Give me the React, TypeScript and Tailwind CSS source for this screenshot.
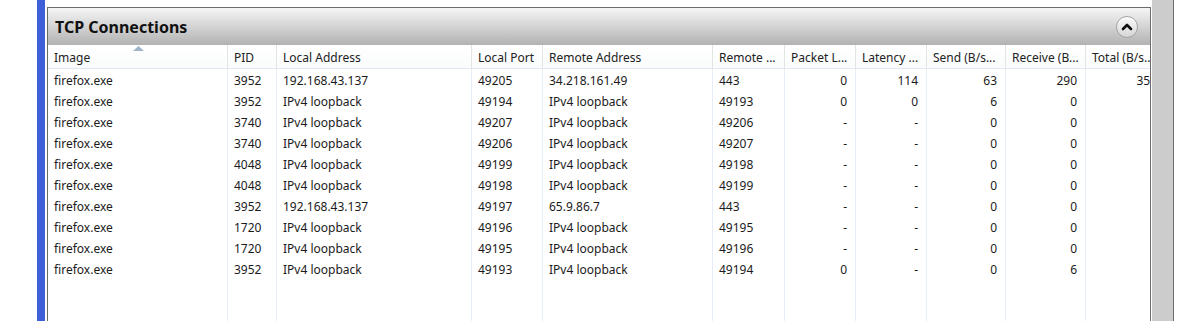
import React from 'react'

interface Col {
  key: string
  label: string
  width: number
  right?: boolean
}

const COLS: Col[] = [
  { key: 'image', label: 'Image', width: 180 },
  { key: 'pid', label: 'PID', width: 49 },
  { key: 'laddr', label: 'Local Address', width: 195 },
  { key: 'lport', label: 'Local Port', width: 71 },
  { key: 'raddr', label: 'Remote Address', width: 170 },
  { key: 'rport', label: 'Remote ...', width: 72 },
  { key: 'loss', label: 'Packet L...', width: 71, right: true },
  { key: 'lat', label: 'Latency ...', width: 71, right: true },
  { key: 'send', label: 'Send (B/s...', width: 79, right: true },
  { key: 'recv', label: 'Receive (B...', width: 80, right: true },
  { key: 'total', label: 'Total (B/s...', width: 80, right: true },
]

type Row = Record<string, string>

const LB = 'IPv4 loopback'
const mk = (pid: string, laddr: string, lport: string, raddr: string, rport: string, loss: string, lat: string, send: string, recv: string, total = ''): Row => ({
  image: 'firefox.exe', pid, laddr, lport, raddr, rport, loss, lat, send, recv, total,
})

const ROWS: Row[] = [
  mk('3952', '192.168.43.137', '49205', '34.218.161.49', '443', '0', '114', '63', '290', '353'),
  mk('3952', LB, '49194', LB, '49193', '0', '0', '6', '0'),
  mk('3740', LB, '49207', LB, '49206', '-', '-', '0', '0'),
  mk('3740', LB, '49206', LB, '49207', '-', '-', '0', '0'),
  mk('4048', LB, '49199', LB, '49198', '-', '-', '0', '0'),
  mk('4048', LB, '49198', LB, '49199', '-', '-', '0', '0'),
  mk('3952', '192.168.43.137', '49197', '65.9.86.7', '443', '-', '-', '0', '0'),
  mk('1720', LB, '49196', LB, '49195', '-', '-', '0', '0'),
  mk('1720', LB, '49195', LB, '49196', '-', '-', '0', '0'),
  mk('3952', LB, '49193', LB, '49194', '0', '-', '0', '6'),
]

function CollapseButton() {
  return (
    <div className="w-[22px] h-[22px] rounded-full border border-[#a3a3a3] bg-gradient-to-b from-[#fbfbfb] to-[#d6d6d6] flex items-center justify-center shadow-[inset_0_1px_0_#ffffff]">
      <svg width="12" height="9" viewBox="0 0 12 9">
        <path d="M2 7 L6 3 L10 7" fill="none" stroke="#111" strokeWidth="2.6" strokeLinecap="round" strokeLinejoin="round" />
      </svg>
    </div>
  )
}

export default function App() {
  return (
    <div className="w-[1188px] h-[321px] bg-white flex overflow-hidden font-['Noto_Sans',sans-serif] text-[12px] text-[#1b1b1b]">
      <div className="w-[37px] shrink-0" />
      <div className="w-[8px] shrink-0 bg-[#3e5fd8]" />
      <div className="w-[2px] shrink-0" />

      <div className="w-[1104px] shrink-0 mt-[7px] border-l border-t border-r border-[#6c6c6c] flex flex-col overflow-hidden">
        <div className="h-[37px] shrink-0 flex items-center justify-between pl-[7px] pr-[12px] bg-gradient-to-b from-[#f6f6f6] to-[#b2b2b2]">
          <span className="text-[16px] font-bold text-[#111] pt-[1px]">TCP Connections</span>
          <CollapseButton />
        </div>

        <div className="flex-1 flex overflow-hidden">
          {COLS.map(col => (
            <div key={col.key} className="shrink-0 flex flex-col" style={{ width: col.width }}>
              <div className="relative h-[24px] shrink-0 flex items-center pt-[2px] border-r border-[#e4e4e4] border-b border-b-[#e1e8f1] bg-gradient-to-b from-white to-[#fafbfc]">
                <span className="pl-[6px] whitespace-nowrap text-[#222]">{col.label}</span>
                {col.key === 'image' && (
                  <svg className="absolute left-[85px] top-[1px]" width="11" height="5" viewBox="0 0 11 5">
                    <path d="M0 5 L5.5 0 L11 5 Z" fill="#9fb3c6" />
                  </svg>
                )}
              </div>
              <div className="flex-1 flex flex-col border-r border-[#e7eef7]">
                {ROWS.map((r, i) => (
                  <div key={i} className={`h-[21px] flex items-center pt-[2px] whitespace-nowrap ${col.right ? 'justify-end pr-[8px]' : 'pl-[6px]'}`}>
                    {r[col.key]}
                  </div>
                ))}
              </div>
            </div>
          ))}
        </div>
      </div>

      <div className="w-[23px] shrink-0 bg-[#cccccc] border-l border-l-white border-r border-r-[#6c6c6c]" />
      <div className="flex-1" />
    </div>
  )
}
